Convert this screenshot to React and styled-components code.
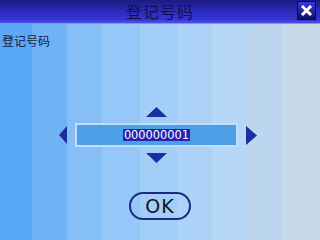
import styled, { createGlobalStyle } from 'styled-components';

const GlobalStyle = createGlobalStyle`
  html, body {
    margin: 0;
    padding: 0;
    width: 320px;
    height: 240px;
    overflow: hidden;
  }
  body {
    font-family: "Noto Sans CJK SC", "DejaVu Sans", sans-serif;
  }
`;

const Screen = styled.div`
  width: 320px;
  height: 240px;
  display: flex;
  flex-direction: column;
  background: linear-gradient(
    to right,
    #5aa8f8 0 32px,
    #70b3f4 32px 67px,
    #86bff6 67px 102px,
    #95c7f8 102px 140px,
    #a3cef8 140px 177px,
    #acd3f7 177px 212px,
    #b6d7f5 212px 247px,
    #bcd6ef 247px 283px,
    #c7dae8 283px 320px
  );
`;

const TitleBar = styled.div`
  height: 23px;
  flex-shrink: 0;
  display: flex;
  align-items: center;
  justify-content: center;
  position: relative;
  background: linear-gradient(to bottom, #1a1a80 0%, #2a2ab8 45%, #3434d4 85%, #5050e8 100%);
  border-bottom: 1px solid #8c8cf4;
`;

const Title = styled.span`
  font-size: 16px;
  line-height: 23px;
  color: #121244;
  letter-spacing: 1px;
`;

const CloseButton = styled.div`
  position: absolute;
  right: 4px;
  top: 1px;
  width: 19px;
  height: 19px;
  background: linear-gradient(to bottom, #3a3ae0, #101060);
  border: 1px solid #0a0a40;
  box-sizing: border-box;
  display: flex;
  align-items: center;
  justify-content: center;
`;

const Content = styled.div`
  flex: 1;
  display: flex;
  flex-direction: column;
  align-items: center;
`;

const Label = styled.div`
  align-self: flex-start;
  margin: 9px 0 0 2px;
  font-size: 12px;
  line-height: 16px;
  color: #1a2040;
`;

const Spinner = styled.div`
  margin-top: 58px;
  margin-left: -4px;
  display: grid;
  grid-template-columns: 8px 163px 11px;
  grid-template-rows: 10px 24px 10px;
  column-gap: 8px;
  row-gap: 6px;
  align-items: center;
  justify-items: center;
`;

const Arrow = styled.svg`
  display: block;
  grid-column: ${({ $col }) => $col};
  grid-row: ${({ $row }) => $row};
`;

const Field = styled.div`
  grid-column: 2;
  grid-row: 2;
  width: 163px;
  height: 24px;
  box-sizing: border-box;
  border: 2px solid #c2defa;
  background: #4ba0e8;
  display: flex;
  align-items: center;
  justify-content: center;
`;

const Selected = styled.span`
  background: #2424b0;
  color: #ffffff;
  font-family: "DejaVu Sans", sans-serif;
  font-size: 11.4px;
  line-height: 12px;
  padding: 0 1px;
`;

const OkButton = styled.button`
  margin-top: 29px;
  width: 62px;
  height: 28px;
  border: 2px solid #1c2a80;
  border-radius: 14px;
  background: transparent;
  font-family: "DejaVu Sans", sans-serif;
  font-size: 19px;
  color: #101018;
  padding: 0;
  line-height: 24px;
  letter-spacing: 1px;
`;

const ARROW = '#1c2ea0';

const App = () => (
  <Screen>
    <GlobalStyle />
    <TitleBar>
      <Title>登记号码</Title>
      <CloseButton>
        <svg width="13" height="13" viewBox="0 0 13 13">
          <path d="M2 2 L11 11 M11 2 L2 11" stroke="#fff" strokeWidth="3" />
        </svg>
      </CloseButton>
    </TitleBar>
    <Content>
      <Label>登记号码</Label>
      <Spinner>
        <Arrow $col={2} $row={1} width="21" height="10" viewBox="0 0 21 10">
          <polygon points="10.5,0 21,10 0,10" fill={ARROW} />
        </Arrow>
        <Arrow $col={1} $row={2} width="8" height="18" viewBox="0 0 8 18">
          <polygon points="0,9 8,0 8,18" fill={ARROW} />
        </Arrow>
        <Field>
          <Selected>000000001</Selected>
        </Field>
        <Arrow $col={3} $row={2} width="11" height="19" viewBox="0 0 11 19">
          <polygon points="0,0 11,9.5 0,19" fill={ARROW} />
        </Arrow>
        <Arrow $col={2} $row={3} width="21" height="10" viewBox="0 0 21 10">
          <polygon points="0,0 21,0 10.5,10" fill={ARROW} />
        </Arrow>
      </Spinner>
      <OkButton>OK</OkButton>
    </Content>
  </Screen>
);

export default App;
